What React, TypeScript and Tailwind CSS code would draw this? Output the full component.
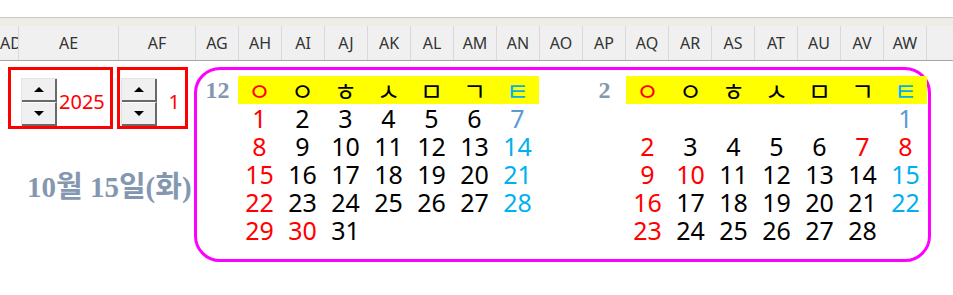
import React from 'react'

const cols: { label: string; w: number }[] = [
  { label: 'AE', w: 100 },
  { label: 'AF', w: 77 },
  ...['AG', 'AH', 'AI', 'AJ', 'AK', 'AL', 'AM', 'AN', 'AO', 'AP', 'AQ', 'AR', 'AS', 'AT', 'AU', 'AV', 'AW'].map((l) => ({ label: l, w: 43 })),
]

const RED = 'text-[#ff0000]'
const SKY = 'text-[#00b0f0]'
const STEEL = 'text-[#5b9bd5]'
const BLACK = 'text-black'

const jamo = [
  { c: 'ㅇ', cls: RED },
  { c: 'ㅇ', cls: BLACK },
  { c: 'ㅎ', cls: BLACK },
  { c: 'ㅅ', cls: BLACK },
  { c: 'ㅁ', cls: BLACK },
  { c: 'ㄱ', cls: BLACK },
  { c: 'ㅌ', cls: SKY },
]

type Day = { n: number; cls: string } | null

function buildMonth(lead: number, days: number, colour: (n: number, col: number) => string): Day[] {
  const out: Day[] = []
  for (let i = 0; i < lead; i++) out.push(null)
  for (let n = 1; n <= days; n++) {
    const col = (lead + n - 1) % 7
    out.push({ n, cls: colour(n, col) })
  }
  return out
}

const dec = buildMonth(0, 31, (n, col) => {
  if (col === 0 || n === 30) return RED
  if (n === 7) return STEEL
  if (col === 6) return SKY
  return BLACK
})

const feb = buildMonth(6, 28, (n, col) => {
  if (n === 1) return STEEL
  if ([7, 8, 10].includes(n) || col === 0) return RED
  if (col === 6) return SKY
  return BLACK
})

function Spinner() {
  return (
    <div className="flex flex-col w-[36px] border-l border-t border-[#e3e3e3]">
      <div className="h-[23px] bg-[#f0f0f0] border-r-2 border-b-2 border-[#696969] flex items-center justify-center">
        <div className="w-0 h-0 border-l-[5px] border-r-[5px] border-b-[5px] border-l-transparent border-r-transparent border-b-black" />
      </div>
      <div className="h-[24px] bg-[#f0f0f0] border-r-2 border-b-2 border-[#696969] border-t border-t-white flex items-center justify-center">
        <div className="w-0 h-0 border-l-[5px] border-r-[5px] border-t-[5px] border-l-transparent border-r-transparent border-t-black" />
      </div>
    </div>
  )
}

function Month({ label, days, labelW }: { label: string; days: Day[]; labelW: string }) {
  return (
    <div className="flex">
      <div className={`${labelW} h-[28px] flex items-center justify-center text-[24px] font-bold text-[#8497b0] font-['Liberation_Serif',serif]`}>
        {label}
      </div>
      <div className="w-[301px]">
        <div className="grid grid-cols-7 h-[28px] bg-[#ffff00]">
          {jamo.map((j, i) => (
            <div key={i} className={`flex items-center justify-center text-[25px] leading-[28px] font-['Noto_Sans_CJK_KR',sans-serif] ${j.cls}`}>
              {j.c}
            </div>
          ))}
        </div>
        <div className="grid grid-cols-7">
          {days.map((d, i) => (
            <div key={i} className={`h-[28px] flex items-center justify-center text-[25px] leading-[28px] font-['Noto_Sans',sans-serif] ${d ? d.cls : ''}`}>
              {d ? d.n : ''}
            </div>
          ))}
        </div>
      </div>
    </div>
  )
}

export default function App() {
  return (
    <div className="w-[953px] h-[295px] bg-white overflow-hidden font-['Noto_Sans',sans-serif]">
      <div className="h-[17px] bg-white" />
      <div className="h-[9px] bg-[#efebe6] border-t border-[#c8c8c8]" />
      <div className="flex h-[35px] bg-[#f0f0f0] border-b border-[#a6a6a6] text-[16px] text-[#333]">
        <div className="w-[19px] shrink-0 overflow-hidden border-r border-[#d9d9d9] flex items-center">
          <div className="w-[40px] ml-[-9px] shrink-0 text-center">AD</div>
        </div>
        {cols.map((c) => (
          <div
            key={c.label}
            style={{ width: c.w }}
            className="shrink-0 border-r border-[#d9d9d9] flex items-center justify-center"
          >
            {c.label}
          </div>
        ))}
        <div className="flex-1" />
      </div>

      <div className="flex pt-[6px]">
        <div className="w-[194px] shrink-0 pl-[8px]">
          <div className="flex gap-[4px]">
            <div className="w-[105px] h-[62px] border-[3px] border-[#ff0000] flex items-end pl-[10px]">
              <div className="flex items-center">
                <Spinner />
                <span className="ml-[2px] text-[20px] text-[#ff0000]">2025</span>
              </div>
            </div>
            <div className="w-[71px] h-[62px] border-[3px] border-[#ff0000] flex items-end pl-[1px]">
              <div className="flex items-center w-full">
                <Spinner />
                <span className="ml-auto mr-[5px] text-[20px] text-[#ff0000]">1</span>
              </div>
            </div>
          </div>
          <div className="mt-[42px] pl-[19px] text-[29px] leading-[32px] font-bold text-[#8497b0] font-['Liberation_Serif','Noto_Sans_CJK_KR',serif] whitespace-nowrap">
            10월 15일(화)
          </div>
        </div>
        <div className="w-[737px] h-[195px] shrink-0 border-[3px] border-[#ff00ff] rounded-[26px] pt-[6px] flex">
          <Month label="12" days={dec} labelW="w-[41px]" />
          <div className="w-[44px]" />
          <Month label="2" days={feb} labelW="w-[43px]" />
        </div>
      </div>
    </div>
  )
}
